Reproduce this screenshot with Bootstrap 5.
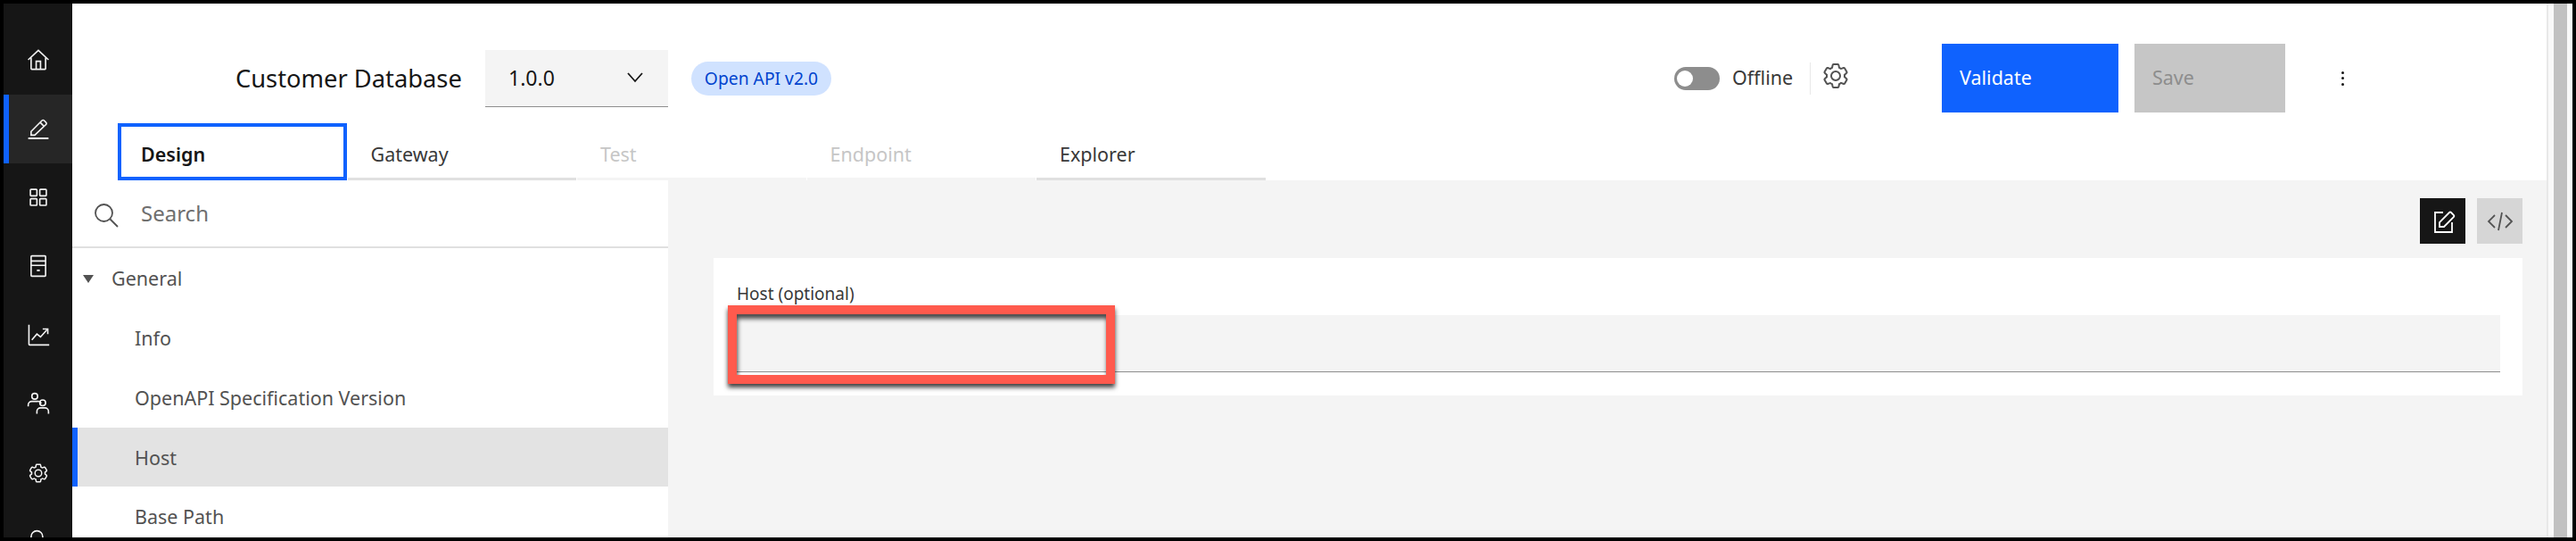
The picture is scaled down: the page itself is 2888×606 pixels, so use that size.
<!DOCTYPE html>
<html lang="en">
<head>
<meta charset="utf-8">
<title>Customer Database</title>
<link href="https://cdn.jsdelivr.net/npm/bootstrap@5.3.0/dist/css/bootstrap.min.css" rel="stylesheet">
<style>
html,body{height:100%;margin:0;overflow:hidden}
body{background:#000;padding:4px;font-family:"Noto Sans","Liberation Sans",sans-serif;color:#161616}
.shell{height:598px;overflow:hidden;background:#fff}
.rail{width:77px;flex:none;background:#161616;padding-top:25px;height:100%;overflow:hidden}
.rail-item{height:77px;flex:none;display:flex;align-items:center;justify-content:center;color:#f4f4f4;border-left:6px solid transparent;border-right:6px solid transparent}
.rail-item.on{background:#262626;border-left-color:#0f62fe}
.rail-item svg{width:26px;height:26px;flex:none;margin-top:-2px}
.rail-item svg.gear-sm{width:24px;height:24px;margin-top:0}
.workspace{min-width:0;display:flex;flex-direction:column}
.topbar{height:77px;margin-top:45px;margin-bottom:12px;padding-left:183px;flex:none}
.app-title{font-size:27.3px;line-height:1;width:280px;white-space:nowrap;color:#161616}
.ver-select{width:205px;height:64px;background:#f4f4f4;border-bottom:1px solid #8d8d8d;padding:0 26px;font-size:23px;color:#161616}
.type-tag{margin-left:26px;width:157px;height:38px;background:#d0e2ff;color:#0043ce;font-size:19.3px;font-weight:400;border-radius:19px;display:flex;align-items:center;justify-content:center;padding:0}
.tog-group{margin-left:945px;width:300px}
.tog{width:51px;height:26px;border-radius:13px;background:#8d8d8d;position:relative;flex:none}
.tog::before{content:"";position:absolute;left:3px;top:4px;width:18px;height:18px;background:#fff;border-radius:50%}
.tog-label{margin-left:14px;font-size:21.5px;color:#393939;width:87px}
.tog-sep{width:1px;height:36px;background:#e8e8e8;margin-right:12px}
.tog-gear{width:32px;height:32px;color:#525252;margin-bottom:5px}
.btn.act{width:198px;height:77px;border-radius:0;border:0;text-align:left;padding:0 20px;font-size:21.5px;background:#0f62fe;color:#fff}
.btn.act.off{width:169px;margin-left:18px;padding:0 20px;background:#c6c6c6;color:#8d8d8d;opacity:1}
.kebab{margin-left:62px;width:4px;height:16px;display:flex;flex-direction:column;justify-content:space-between;align-items:center}
.kebab i{display:block;width:3px;height:3px;background:#161616;border-radius:50%}
.tabset{flex:none;height:64px;padding-left:51px;gap:1px;border:0;flex-wrap:nowrap}
.tabset .nav-link{width:256.5px;height:64px;border-radius:0;padding:9px 0 0 26px;display:flex;align-items:center;font-size:21.5px;color:#393939;border:0;border-bottom:3px solid #e0e0e0}
.tabset .nav-link.active{background:#fff;border:4px solid #0f62fe;padding:6px 0 0 22px;color:#161616;font-weight:600}
.tabset .nav-link.disabled{color:#c6c6c6;border-bottom-color:#f4f4f4}
.split{min-height:0;flex:1;overflow:hidden}
.tree{width:668px;flex:none;background:#fff;overflow:hidden}
.tree-search{height:76px;border-bottom:2px solid #e0e0e0;padding-left:24px;color:#6f6f6f;font-size:24px}
.tree-search svg{width:28px;height:28px;margin-right:25px;color:#525252;margin-top:3px}
.tree .list-group-item{border:0;border-radius:0;height:67px;padding:2px 0 0 70px;display:flex;align-items:center;font-size:21.5px;color:#525252;background:transparent}
.tree .list-group-item.head{padding-left:12px;height:67px}
.tree .list-group-item.sel{background:#e3e3e3;box-shadow:inset 6px 0 0 #0f62fe;color:#525252;height:66px}
.caret-down{width:0;height:0;border-left:6.5px solid transparent;border-right:6.5px solid transparent;border-top:9px solid #525252;margin-right:20px}
.canvas{background:#f4f4f4;min-width:0;padding:20px 27px 0 51px}
.view-btns{gap:13px;height:51px;margin-bottom:16px}
.view-btn{width:51px;height:51px;display:flex;align-items:center;justify-content:center;padding:0;border:0;border-radius:0;background:#d6d6d6;color:#525252}
.view-btn.on{background:#161616;color:#fff}
.view-btn svg{width:30px;height:30px}
.field-card{background:#fff;height:154px;padding:26px 25px 0 26px;position:relative}
.field-label{font-size:19px;line-height:28px;height:28px;margin:0 0 10px;color:#393939;display:block}
.field-input{display:block;height:64px;width:100%;background:#f4f4f4;border:0;border-bottom:1px solid #8d8d8d;border-radius:0}
.callout{position:absolute;left:16px;top:53px;width:434px;height:88px;border:10px solid #ff5a4d;box-shadow:0 4px 5px rgba(0,0,0,.75),inset 1px 5px 5px rgba(0,0,0,.7)}
.gutter{width:29px;flex:none;background:#f9f9f9;border-left:2px solid #e8e8e8;padding:0 6px}
.gutter-thumb{height:100%;background:#c1c1c1}
</style>
</head>
<body>
<svg width="0" height="0" class="d-none" aria-hidden="true">
<symbol id="ic-gear" viewBox="0 0 32 32"><path fill="currentColor" d="M27,16.76c0-.25,0-.5,0-.76s0-.51,0-.77l1.92-1.68A2,2,0,0,0,29.3,11L26.94,7a2,2,0,0,0-1.73-1,2,2,0,0,0-.64.1l-2.43.82a11.35,11.35,0,0,0-1.31-.75l-.51-2.52a2,2,0,0,0-2-1.61H13.64a2,2,0,0,0-2,1.61l-.51,2.52a11.48,11.48,0,0,0-1.32.75L7.43,6.06A2,2,0,0,0,6.79,6,2,2,0,0,0,5.06,7L2.7,11a2,2,0,0,0,.41,2.51L5,15.24c0,.25,0,.5,0,.76s0,.51,0,.77L3.11,18.45A2,2,0,0,0,2.7,21L5.06,25a2,2,0,0,0,1.73,1,2,2,0,0,0,.64-.1l2.43-.82a11.35,11.35,0,0,0,1.31.75l.51,2.52a2,2,0,0,0,2,1.61h4.72a2,2,0,0,0,2-1.61l.51-2.52a11.48,11.48,0,0,0,1.32-.75l2.42.82a2,2,0,0,0,.64.1,2,2,0,0,0,1.73-1L29.3,21a2,2,0,0,0-.41-2.51ZM25.21,24l-3.43-1.16a8.86,8.86,0,0,1-2.71,1.57L18.36,28H13.64l-.71-3.55a9.36,9.36,0,0,1-2.7-1.57L6.79,24,4.43,20l2.72-2.4a8.9,8.9,0,0,1,0-3.13L4.43,12,6.79,8l3.43,1.16a8.86,8.86,0,0,1,2.71-1.57L13.64,4h4.72l.71,3.55a9.36,9.36,0,0,1,2.7,1.57L25.21,8,27.57,12l-2.72,2.4a8.9,8.9,0,0,1,0,3.13L27.57,20Z"/><path fill="currentColor" d="M16,22a6,6,0,1,1,6-6A5.94,5.94,0,0,1,16,22Zm0-10a3.91,3.91,0,0,0-4,4,3.91,3.91,0,0,0,4,4,3.91,3.91,0,0,0,4-4A3.91,3.91,0,0,0,16,12Z"/></symbol>
</svg>
<div class="shell d-flex">
  <nav class="rail d-flex flex-column flex-none">
    <div class="rail-item"><svg viewBox="0 0 32 32" fill="none" stroke="currentColor" stroke-width="2"><path d="M2 16 16 3l14 13"/><path d="M6 13v15a1 1 0 0 0 1 1h18a1 1 0 0 0 1-1V13"/><path d="M13 29V18h6v11"/></svg></div>
    <div class="rail-item on"><svg viewBox="0 0 32 32" fill="none" stroke="currentColor" stroke-width="2"><path d="M2 29.500h28" stroke-width="2.400"/><path d="M6 25v-5L21 5a2 2 0 0 1 3 0l2.500 2.500a2 2 0 0 1 0 3L11 25Z"/><path d="m18.500 7.500 5.500 5.500"/></svg></div>
    <div class="rail-item"><svg viewBox="0 0 32 32" fill="none" stroke="currentColor" stroke-width="2"><rect x="5" y="5" width="9" height="9" rx="1"/><rect x="18" y="5" width="9" height="9" rx="1"/><rect x="5" y="18" width="9" height="9" rx="1"/><rect x="18" y="18" width="9" height="9" rx="1"/></svg></div>
    <div class="rail-item"><svg viewBox="0 0 32 32" fill="none" stroke="currentColor" stroke-width="2"><rect x="6" y="2" width="20" height="28" rx="1"/><path d="M6 9h20M6 15h20"/><path d="M14 22h4" stroke-width="2.400"/></svg></div>
    <div class="rail-item"><svg viewBox="0 0 32 32" fill="none" stroke="currentColor" stroke-width="2"><path d="M3 2v27a1 1 0 0 0 1 1h27"/><path d="m7 23 7-8 5 4 9-10"/><path d="M22 8h7v7"/></svg></div>
    <div class="rail-item"><svg viewBox="0 0 32 32" fill="none" stroke="currentColor" stroke-width="2"><circle cx="11" cy="6" r="4"/><path d="M2 20v-2a5 5 0 0 1 5-5h8a5 5 0 0 1 5 3"/><circle cx="22" cy="15" r="4"/><path d="M14 30v-3a5 5 0 0 1 5-5h6a5 5 0 0 1 5 5v3"/></svg></div>
    <div class="rail-item"><svg class="gear-sm"><use href="#ic-gear"/></svg></div>
    <div class="rail-item"><svg viewBox="0 0 32 32" fill="none" stroke="currentColor" stroke-width="2"><circle cx="14" cy="10" r="8"/><path d="M4 30v-3a6 6 0 0 1 6-6h8a6 6 0 0 1 6 6v3"/></svg></div>
  </nav>

  <div class="workspace flex-grow-1">
    <header class="topbar d-flex align-items-center">
      <div class="app-title">Customer Database</div>
      <div class="ver-select d-flex align-items-center justify-content-between">
        <span>1.0.0</span>
        <svg width="22" height="14" viewBox="0 0 22 14" fill="none" stroke="#161616" stroke-width="1.800" class="me-0"><path d="m3 2 8 9 8-9"/></svg>
      </div>
      <span class="badge type-tag">Open API v2.0</span>
      <div class="tog-group d-flex align-items-center">
        <span class="tog"></span>
        <span class="tog-label">Offline</span>
        <span class="tog-sep"></span>
        <svg class="tog-gear"><use href="#ic-gear"/></svg>
      </div>
      <button class="btn act" type="button">Validate</button>
      <button class="btn act off" type="button">Save</button>
      <div class="kebab"><i></i><i></i><i></i></div>
    </header>

    <ul class="nav tabset">
      <li class="nav-item"><a class="nav-link active" href="#">Design</a></li>
      <li class="nav-item"><a class="nav-link" href="#">Gateway</a></li>
      <li class="nav-item"><a class="nav-link disabled" href="#">Test</a></li>
      <li class="nav-item"><a class="nav-link disabled" href="#">Endpoint</a></li>
      <li class="nav-item"><a class="nav-link" href="#">Explorer</a></li>
    </ul>

    <div class="split d-flex">
      <aside class="tree">
        <div class="tree-search d-flex align-items-center">
          <svg viewBox="0 0 28 28" fill="none" stroke="currentColor" stroke-width="1.800"><circle cx="11.500" cy="11.500" r="9.500"/><path d="m18.500 18.500 8.500 8.500"/></svg>
          <span>Search</span>
        </div>
        <div class="list-group">
          <div class="list-group-item head"><span class="caret-down"></span>General</div>
          <div class="list-group-item">Info</div>
          <div class="list-group-item">OpenAPI Specification Version</div>
          <div class="list-group-item sel">Host</div>
          <div class="list-group-item">Base Path</div>
        </div>
      </aside>
      <main class="canvas flex-grow-1">
        <div class="view-btns d-flex justify-content-end">
          <button class="view-btn on" type="button" aria-label="Form"><svg viewBox="0 0 30 30" fill="none" stroke="currentColor" stroke-width="1.800"><path d="M15 5H6v22h19V16"/><path d="M11 21v-5L22 5a1.500 1.500 0 0 1 2 0l3 3a1.500 1.500 0 0 1 0 2L16 21Z"/></svg></button>
          <button class="view-btn" type="button" aria-label="Source"><svg viewBox="0 0 30 30" fill="none" stroke="currentColor" stroke-width="1.800"><path d="M9 8 2 15l7 7M21 8l7 7-7 7M17 5l-4 20"/></svg></button>
        </div>
        <section class="field-card">
          <label class="field-label" for="host">Host (optional)</label>
          <input class="field-input" id="host" type="text">
          <div class="callout"></div>
        </section>
      </main>
    </div>
  </div>
  <div class="gutter"><div class="gutter-thumb"></div></div>
</div>
<script src="https://cdn.jsdelivr.net/npm/bootstrap@5.3.0/dist/js/bootstrap.bundle.min.js"></script>
</body>
</html>
